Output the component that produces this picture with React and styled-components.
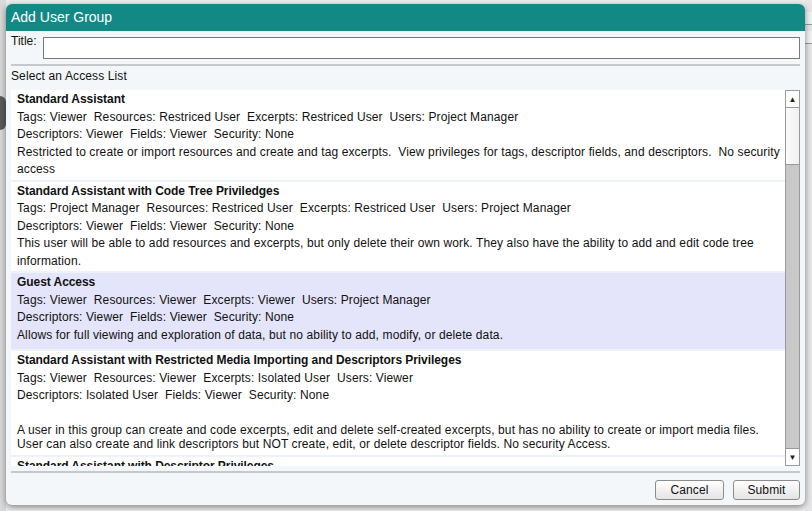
import React from "react";
import styled, { createGlobalStyle } from "styled-components";

const GlobalStyle = createGlobalStyle`
  html, body {
    margin: 0;
    padding: 0;
  }
  body {
    font-family: "Liberation Sans", Arial, sans-serif;
    background: #dedede;
  }
`;

const Page = styled.div`
  position: relative;
  width: 812px;
  height: 511px;
  overflow: hidden;
  display: flex;
  background: #e2e2e2;
`;

const SideStrip = styled.div`
  width: 6px;
  display: flex;
  flex-direction: column;
  padding-top: 96px;
  background: #d9d9d9;
`;

const AvatarBlob = styled.div`
  width: 6px;
  height: 34px;
  background: #5a5a5a;
  border-radius: 0 8px 8px 0;
`;

const PageMain = styled.div`
  flex: 1;
  background: #ececec;
`;

const RightStrip = styled.div`
  width: 7px;
  display: flex;
  flex-direction: column;
  gap: 6px;
  padding-top: 12px;
  overflow: hidden;
  background: #e6e6e6;
`;

const Notch = styled.div`
  height: 12px;
  border-bottom: 1px solid #999;
  background: #f2f2f2;
`;

const Dialog = styled.div`
  position: absolute;
  left: 6px;
  top: 4px;
  width: 799px;
  height: 501px;
  display: flex;
  flex-direction: column;
  background: #f4f7f9;
  border-radius: 6px;
  box-shadow: 0 2px 6px rgba(0, 0, 0, 0.45);
  overflow: hidden;
`;

const TitleBar = styled.div`
  height: 28px;
  display: flex;
  align-items: center;
  padding: 0 5px 1px;
  box-sizing: border-box;
  background: #138985;
  color: #fff;
  font-size: 14px;
`;

const Body = styled.div`
  flex: 1;
  display: flex;
  flex-direction: column;
  padding: 0 5px 5px;
`;

const FieldRow = styled.div`
  display: flex;
  align-items: flex-start;
  gap: 6px;
  padding-top: 3px;
`;

const Label = styled.label`
  font-size: 12px;
  line-height: 14px;
  color: #111;
`;

const Input = styled.input`
  flex: 1;
  height: 22px;
  margin: 3px 0 0;
  box-sizing: border-box;
  border: 1px solid #7a7a7a;
  background: #fff;
  font-family: inherit;
  font-size: 12px;
`;

const Rule = styled.div`
  height: 2px;
  background: #c6c9cc;
  margin-top: ${({ $top }) => $top}px;
`;

const SectionLabel = styled.div`
  margin-top: 2px;
  font-size: 12px;
  line-height: 16px;
  letter-spacing: 0.12px;
  color: #111;
`;

const ListBox = styled.div`
  margin-top: 6px;
  height: 376px;
  display: flex;
  background: #fff;
`;

const ListScroll = styled.div`
  flex: 1;
  overflow: hidden;
  display: flex;
  flex-direction: column;
  gap: 2px;
  background: #eef3f7;
`;

const Item = styled.div`
  flex-shrink: 0;
  padding: 1px 1px ${({ $padBottom }) => $padBottom}px 6px;
  background: ${({ $selected }) => ($selected ? "#e4e4fa" : "#fff")};
  font-size: 12px;
  line-height: 17.5px;
  color: #111;
`;

const ItemTitle = styled.div`
  font-weight: bold;
  letter-spacing: -0.06px;
`;

const ItemLine = styled.div`
  white-space: pre-wrap;
  letter-spacing: 0.12px;
  line-height: ${({ $tight }) => ($tight ? "14px" : "17.5px")};
  padding-top: ${({ $tight }) => ($tight ? "18px" : "0")};
  padding-bottom: ${({ $tight }) => ($tight ? "3px" : "0")};
`;

const ScrollBar = styled.div`
  width: 15px;
  display: flex;
  flex-direction: column;
  box-sizing: border-box;
  border: 1px solid #9a9a9a;
  background: #c8c8c8;
`;

const ScrollButton = styled.div`
  height: 16px;
  display: flex;
  align-items: center;
  justify-content: center;
  background: #fff;
  border-${({ $edge }) => $edge}: 1px solid #9a9a9a;
  font-size: 8px;
  color: #222;
`;

const Thumb = styled.div`
  height: 57px;
  box-sizing: border-box;
  background: linear-gradient(to right, #fbfbfb, #f0f0f0);
  border-bottom: 1px solid #9a9a9a;
`;

const Track = styled.div`
  flex: 1;
`;

const Footer = styled.div`
  display: flex;
  justify-content: flex-end;
  gap: 9px;
  margin-top: 7px;
`;

const Button = styled.button`
  height: 20px;
  width: ${({ $w }) => $w}px;
  padding: 0;
  border: 1px solid #8c8c8c;
  border-radius: 3px;
  background: linear-gradient(#ffffff, #e4e4e4);
  font-family: inherit;
  font-size: 12px;
  letter-spacing: 0.12px;
  color: #111;
`;

const items = [
  {
    title: "Standard Assistant",
    tags: "Tags: Viewer  Resources: Restriced User  Excerpts: Restriced User  Users: Project Manager",
    desc: "Descriptors: Viewer  Fields: Viewer  Security: None",
    text: "Restricted to create or import resources and create and tag excerpts.  View privileges for tags, descriptor fields, and descriptors.  No security access",
    pad: 1,
  },
  {
    title: "Standard Assistant with Code Tree Priviledges",
    tags: "Tags: Project Manager  Resources: Restriced User  Excerpts: Restriced User  Users: Project Manager",
    desc: "Descriptors: Viewer  Fields: Viewer  Security: None",
    text: "This user will be able to add resources and excerpts, but only delete their own work. They also have the ability to add and edit code tree information.",
    pad: 1,
  },
  {
    title: "Guest Access",
    selected: true,
    tags: "Tags: Viewer  Resources: Viewer  Excerpts: Viewer  Users: Project Manager",
    desc: "Descriptors: Viewer  Fields: Viewer  Security: None",
    text: "Allows for full viewing and exploration of data, but no ability to add, modify, or delete data.",
    pad: 5,
  },
  {
    title: "Standard Assistant with Restricted Media Importing and Descriptors Privileges",
    tags: "Tags: Viewer  Resources: Viewer  Excerpts: Isolated User  Users: Viewer",
    desc: "Descriptors: Isolated User  Fields: Viewer  Security: None",
    text: "A user in this group can create and code excerpts, edit and delete self-created excerpts, but has no ability to create or import media files.\nUser can also create and link descriptors but NOT create, edit, or delete descriptor fields. No security Access.",
    tight: true,
    pad: 1,
  },
  {
    title: "Standard Assistant with Descriptor Privileges",
    tags: "Tags: Viewer  Resources: Viewer  Excerpts: Viewer  Users: Viewer",
    desc: "Descriptors: Project Manager  Fields: Viewer  Security: None",
    pad: 1,
  },
];

export default function App() {
  return (
    <>
      <GlobalStyle />
      <Page>
        <SideStrip>
          <AvatarBlob />
        </SideStrip>
        <PageMain />
        <RightStrip>
          <Notch />
          <Notch />
        </RightStrip>

        <Dialog>
          <TitleBar>Add User Group</TitleBar>
          <Body>
            <FieldRow>
              <Label htmlFor="title">Title:</Label>
              <Input id="title" />
            </FieldRow>
            <Rule $top={5} />
            <SectionLabel>Select an Access List</SectionLabel>
            <ListBox>
              <ListScroll>
                {items.map((it) => (
                  <Item key={it.title} $selected={it.selected} $padBottom={it.pad}>
                    <ItemTitle>{it.title}</ItemTitle>
                    <ItemLine>{it.tags}</ItemLine>
                    <ItemLine>{it.desc}</ItemLine>
                    {it.text && <ItemLine $tight={it.tight}>{it.text}</ItemLine>}
                  </Item>
                ))}
              </ListScroll>
              <ScrollBar>
                <ScrollButton $edge="bottom">▲</ScrollButton>
                <Thumb />
                <Track />
                <ScrollButton $edge="top">▼</ScrollButton>
              </ScrollBar>
            </ListBox>
            <Rule $top={5} />
            <Footer>
              <Button $w={69}>Cancel</Button>
              <Button $w={67}>Submit</Button>
            </Footer>
          </Body>
        </Dialog>
      </Page>
    </>
  );
}
